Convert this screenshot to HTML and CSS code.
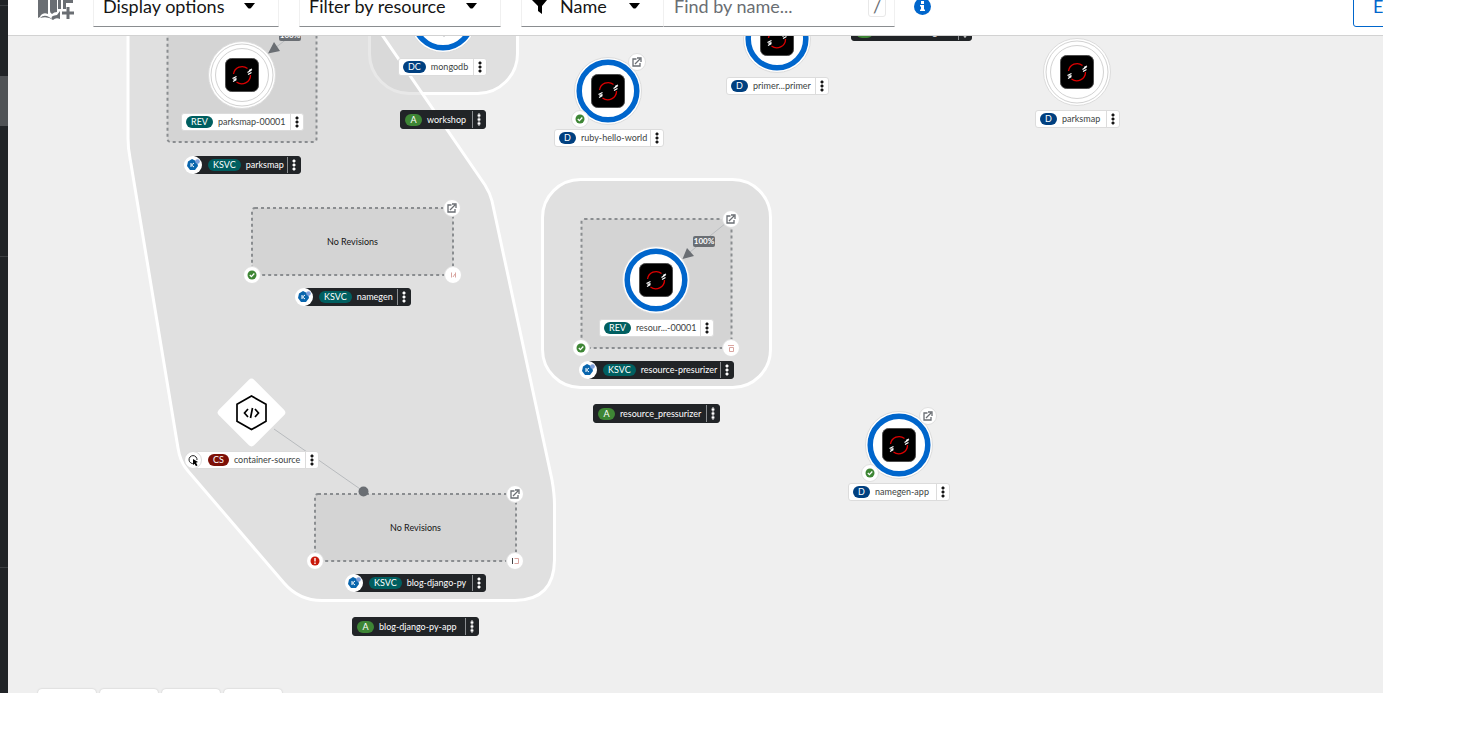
FILE: index.html
```html
<!DOCTYPE html>
<html lang="en">
<head>
<meta charset="utf-8">
<title>Topology</title>
<link rel="stylesheet" href="styles.css">
</head>
<body>
<div class="app">
  <nav class="sidebar" aria-label="Main">
    <span class="nav-item"></span>
    <span class="nav-item current"></span>
    <span class="nav-item tall"></span>
    <span class="nav-item taller"></span>
  </nav>
  <main class="main">
    <header class="toolbar">
      <button class="catalog" aria-label="Add to project">
        <svg width="38" height="42" viewBox="0 0 38 42"><path fill="#6a6e73" d="M0 8q5-2 10 0v21q-4-2-7 1-1 3-3 3zM12 9q3-2 7-2v20q-3 0-5 2-2-1-2-3zM20 7q3 0 3 2v15h-3zM25 9q4-2 10-1v10h-7v6h-3zM2 33q4-4 9-1l3 2q-2-3 5-4l3-4v8q-4-2-7 1-5-4-13-2z"/><path stroke="#6a6e73" stroke-width="3" d="M30 22v12M24 28h12"/></svg>
      </button>
      <button class="toggle display">Display options<svg class="caret" width="12" height="6"><path d="M0 0h11l-4 5q-1.500 1-3 0z"/></svg></button>
      <button class="toggle filter">Filter by resource<svg class="caret" width="12" height="6"><path d="M0 0h11l-4 5q-1.500 1-3 0z"/></svg></button>
      <div class="search-group">
        <label class="toggle by">
          <svg width="17" height="16"><path d="M1 0h15q1 1 0 2l-5 6v8l-4-3v-5l-6-6q-1-1 0-2z"/></svg>
          <select aria-label="Search by"><option>Name</option><option>Label</option></select>
          <svg class="caret" width="12" height="6"><path d="M0 0h11l-4 5q-1.500 1-3 0z"/></svg>
        </label>
        <div class="find"><input type="text" placeholder="Find by name..." aria-label="Find by name"><kbd>/</kbd></div>
      </div>
      <button class="info" aria-label="Search help"><svg width="17" height="17"><circle cx="8.500" cy="8.500" r="8.500" fill="#06c"/><path fill="#fff" d="M7 3h3v3h-3zM6 7h4v4.500h1v1.500h-5v-1.500h1v-3h-1z"/></svg></button>
      <div class="actions"><button class="export">Export application</button></div>
    </header>

    <section class="canvas" aria-label="Topology view">
      <svg class="graph">
        <defs>
          <g id="logo">
            <rect x="-16.500" y="-16.500" width="33" height="33" rx="6" fill="#000" stroke="#4c4c4c"/>
            <path d="M-8.500-1A8.700 8.700 0 0 1 5.500-6.500M8.500 0A8.700 8.700 0 0 1-5.500 7" fill="none" stroke="#d00" stroke-width="1.300"/>
            <path d="M5.500-2.500l4-2.500M6-.5l3.500-2M7-4.500l3-1.500M-9.500 3.500l4-2M-9 6.500l3.500-2M-8.500 4.500l3-1" stroke="#fff" stroke-width="1.200"/>
          </g>
          <g id="ring">
            <circle r="33.500" fill="#fff" stroke="#dcdcdc"/>
            <circle r="28.800" fill="#fff" stroke="#06c" stroke-width="5.500"/>
          </g>
          <g id="idle">
            <circle r="33.500" fill="#fff" stroke="#dcdcdc"/>
            <circle r="31" fill="#fff" stroke="#d2d2d2"/>
            <circle r="26.500" fill="#fff" stroke="#d2d2d2"/>
          </g>
          <circle id="dec" r="8.500" fill="#fff" stroke="#e0e0e0"/>
          <g id="open"><use href="#dec"/><path d="M-.5-3H-4V4H3V1M-2 2L3-3M0-4H4V0" fill="none" stroke="#6a6e73" stroke-width="1.300"/></g>
          <g id="ok"><use href="#dec"/><circle r="4.500" fill="#3e8635"/><path d="M-2.200 0L-.6 1.600 2.300-1.500" fill="none" stroke="#fff" stroke-width="1.300"/></g>
          <g id="err"><use href="#dec"/><circle r="4.500" fill="#c9190b"/><path d="M0-3v3.500M0 1.500v1.500" stroke="#fff" stroke-width="1.400"/></g>
        </defs>
        <g transform="translate(-8 -36)">
          <rect class="zone" x="369.500" y="-60" width="148" height="153.500" rx="40"/>
          <path class="blob" d="M128 0V138Q128 148 130 158L178 448Q180 462 188 471L284 583Q299 600.500 322 600.500H515Q554 600 554.500 560V505Q554.500 494 552 480L492 201Q490 193 485 185L365 10z"/>
          <rect class="zone" x="542.500" y="179.500" width="228" height="208" rx="38"/>

          <g class="revision">
            <rect x="167.500" y="0" width="149" height="142" rx="3"/>
            <rect x="252" y="208" width="201" height="67" rx="3"/>
            <rect x="581.500" y="219" width="150" height="129" rx="3"/>
            <rect x="315" y="494" width="201" height="67" rx="3"/>
          </g>

          <path d="M317 16L275 48M731 219L690 252M274 429L363 491" stroke="#b8bbbe" fill="none"/>
          <path d="M268 53.500l12-2.500-6-9zM682.500 259l11.500-3-7-8z" fill="#6a6e73"/>
          <circle cx="363.500" cy="491.500" r="5" fill="#6a6e73"/>

          <use href="#idle" x="242" y="75"/><use href="#logo" x="242" y="75"/>
          <use href="#ring" x="443" y="19"/>
          <path d="M444 30v7" stroke="#b8bbbe"/>
          <use href="#ring" x="608" y="91"/><use href="#logo" x="608" y="91"/>
          <use href="#ring" x="777" y="39"/><use href="#logo" x="777" y="39"/>
          <use href="#idle" x="1077" y="72"/><use href="#logo" x="1077" y="72"/>
          <use href="#ring" x="656" y="280"/><use href="#logo" x="656" y="280"/>
          <use href="#ring" x="899" y="445"/><use href="#logo" x="899" y="445"/>

          <rect x="-25" y="-25" width="50" height="50" rx="4" fill="#fff" transform="translate(251.500 412.500) rotate(45)"/>
          <path d="M251.500 396L266 404.300V421.300L251.500 429.600 237 421.300V404.300z" fill="none" stroke="#000" stroke-width="1.700"/>
          <path d="M248 409l-3.500 4 3.500 4M255 409l3.500 4-3.500 4M252.500 408l-2 10" fill="none" stroke="#000" stroke-width="1.700"/>

          <use href="#open" x="637" y="62"/><use href="#ok" x="580" y="119"/>
          <use href="#open" x="452" y="208"/><use href="#ok" x="252" y="275"/><use href="#dec" x="453" y="275"/>
          <use href="#open" x="731" y="219"/><use href="#ok" x="581" y="348"/><use href="#dec" x="731" y="348"/>
          <use href="#open" x="515" y="494"/><use href="#err" x="315" y="561"/><use href="#dec" x="515" y="561"/>
          <use href="#open" x="928" y="416"/><use href="#ok" x="870" y="473"/>
          <g fill="none" stroke="#d9a5a0">
            <path d="M451.500 272.500v5M455.500 272.500v5M453 277l2-3"/>
            <path d="M729.500 347.500h4v4h-4zM728 345.500h6"/>
            <path d="M514.500 558.500h4v5h-4"/>
          </g>
          <path d="M512.500 558v6" stroke="#444"/>
        </g>
      </svg>

      <span class="traffic t1">100%</span>
      <span class="traffic t2">100%</span>
      <p class="empty e1">No Revisions</p>
      <p class="empty e2">No Revisions</p>

      <div class="label n-rev1"><span class="badge teal">REV</span><span class="name">parksmap-00001</span><button class="kebab" aria-label="Actions"></button></div>
      <div class="label dark knative n-parks"><svg class="kn" viewBox="-9 -9 18 18"><circle r="9" fill="#fff"/><path fill="#0865ad" d="M-1-6L4-3.500 5 1 2 5h-5L-6 1-5-3.500z"/><circle cx="4.500" cy="-3.500" r="2.300" fill="#7e9fda"/><path d="M-2-2v4M1-2L-1.500 0l2.500 2" stroke="#fff" fill="none"/></svg><span class="badge teal">KSVC</span><span class="name">parksmap</span><button class="kebab" aria-label="Actions"></button></div>
      <div class="label n-mongo"><span class="badge navy">DC</span><span class="name">mongodb</span><button class="kebab" aria-label="Actions"></button></div>
      <div class="label dark group n-workshop"><span class="badge green">A</span><span class="name">workshop</span><button class="kebab" aria-label="Actions"></button></div>
      <div class="label n-ruby"><span class="badge navy">D</span><span class="name">ruby-hello-world</span><button class="kebab" aria-label="Actions"></button></div>
      <div class="label n-primer"><span class="badge navy">D</span><span class="name">primer...primer</span><button class="kebab" aria-label="Actions"></button></div>
      <div class="label dark group n-image"><span class="badge green">A</span><span class="name">container-image</span><button class="kebab" aria-label="Actions"></button></div>
      <div class="label n-parks2"><span class="badge navy">D</span><span class="name">parksmap</span><button class="kebab" aria-label="Actions"></button></div>
      <div class="label dark knative n-namegen"><svg class="kn" viewBox="-9 -9 18 18"><circle r="9" fill="#fff"/><path fill="#0865ad" d="M-1-6L4-3.500 5 1 2 5h-5L-6 1-5-3.500z"/><circle cx="4.500" cy="-3.500" r="2.300" fill="#7e9fda"/><path d="M-2-2v4M1-2L-1.500 0l2.500 2" stroke="#fff" fill="none"/></svg><span class="badge teal">KSVC</span><span class="name">namegen</span><button class="kebab" aria-label="Actions"></button></div>
      <div class="label n-rev2"><span class="badge teal">REV</span><span class="name">resour...-00001</span><button class="kebab" aria-label="Actions"></button></div>
      <div class="label dark knative n-resource"><svg class="kn" viewBox="-9 -9 18 18"><circle r="9" fill="#fff"/><path fill="#0865ad" d="M-1-6L4-3.500 5 1 2 5h-5L-6 1-5-3.500z"/><circle cx="4.500" cy="-3.500" r="2.300" fill="#7e9fda"/><path d="M-2-2v4M1-2L-1.500 0l2.500 2" stroke="#fff" fill="none"/></svg><span class="badge teal">KSVC</span><span class="name">resource-presurizer</span><button class="kebab" aria-label="Actions"></button></div>
      <div class="label dark group n-press"><span class="badge green">A</span><span class="name">resource_pressurizer</span><button class="kebab" aria-label="Actions"></button></div>
      <div class="label knative n-cs"><svg class="kn" viewBox="-9 -9 18 18"><circle r="8.500" fill="#fff" stroke="#dcdcdc"/><path d="M1 3.500A4 4 0 1 1 4 0" fill="none" stroke="#222"/><path d="M0-1l5 3-2 .8 1.500 2.500-1.500 1-1.500-2.500L0 5z" fill="#000"/></svg><span class="badge red">CS</span><span class="name">container-source</span><button class="kebab" aria-label="Actions"></button></div>
      <div class="label dark knative n-blog"><svg class="kn" viewBox="-9 -9 18 18"><circle r="9" fill="#fff"/><path fill="#0865ad" d="M-1-6L4-3.500 5 1 2 5h-5L-6 1-5-3.500z"/><circle cx="4.500" cy="-3.500" r="2.300" fill="#7e9fda"/><path d="M-2-2v4M1-2L-1.500 0l2.500 2" stroke="#fff" fill="none"/></svg><span class="badge teal">KSVC</span><span class="name">blog-django-py</span><button class="kebab" aria-label="Actions"></button></div>
      <div class="label dark group n-blogapp"><span class="badge green">A</span><span class="name">blog-django-py-app</span><button class="kebab" aria-label="Actions"></button></div>
      <div class="label n-app"><span class="badge navy">D</span><span class="name">namegen-app</span><button class="kebab" aria-label="Actions"></button></div>

      <div class="zoom-bar">
        <button aria-label="Zoom in"></button>
        <button aria-label="Zoom out"></button>
        <button aria-label="Fit to screen"></button>
        <button aria-label="Reset view"></button>
      </div>
    </section>
  </main>
</div>
</body>
</html>
```

FILE: styles.css
```css
* { box-sizing: border-box; }

body {
  margin: 0;
  background: #fff;
  color: #151515;
  font-family: Lato, "Open Sans", sans-serif;
}

button, select, input {
  font: inherit;
  color: inherit;
  margin: 0;
  padding: 0;
  border: 0;
  background: none;
}

.app {
  display: flex;
  height: calc(100vh - 36px);
  margin-right: 86px;
  overflow: hidden;
}

/* Navigation edge */
.sidebar {
  flex: none;
  width: 8px;
  background: #212427;
  display: flex;
  flex-direction: column;
}
.nav-item { height: 6px; border-bottom: 1px solid #3c3f42; }
.nav-item.current { height: 50px; margin-top: 70px; background: #4f5255; border: 0; }
.nav-item.tall { height: 131px; }
.nav-item.taller { height: 311px; }

.main {
  flex: 1;
  min-width: 0;
  display: flex;
  flex-direction: column;
}

/* Toolbar */
.toolbar {
  flex: none;
  height: 36px;
  padding: 0 0 8px 30px;
  display: flex;
  align-items: flex-end;
  overflow: hidden;
  border-bottom: 1px solid #d2d2d2;
  font-size: 18px;
  background: #fff;
}
.toolbar > * { flex: none; height: 42px; }
.catalog { width: 38px; margin-right: 17px; }
.toggle {
  display: flex;
  align-items: center;
  gap: 12px;
  padding: 0 9px;
  border: 1px solid #f0f0f0;
  border-bottom-color: #8a8d90;
}
.caret { margin-left: auto; }
.display { width: 186px; padding-right: 22px; margin-right: 20px; }
.filter { width: 202px; padding-right: 22px; margin-right: 20px; }
.search-group { display: flex; width: 374px; }
.by { flex: none; width: 143px; padding-right: 22px; }
.by select { appearance: none; width: 54px; }
.find {
  flex: 1;
  min-width: 0;
  display: flex;
  align-items: center;
  padding: 0 8px 0 10px;
  border: 1px solid #f0f0f0;
  border-left: 0;
  border-bottom-color: #8a8d90;
}
.find input { flex: 1; min-width: 0; outline: 0; }
.find input::placeholder { color: #6a6e73; opacity: 1; }
.find kbd {
  width: 18px;
  font: inherit;
  line-height: 20px;
  text-align: center;
  color: #6a6e73;
  border: 1px solid #e8e8e8;
  border-radius: 3px;
}
.info { display: flex; align-items: center; margin-left: 19px; }
.toolbar .actions { width: 30px; margin-left: auto; overflow: hidden; }
.export {
  height: 42px;
  padding: 0 19px;
  white-space: nowrap;
  color: #06c;
  border: 1px solid #06c;
  border-radius: 3px;
}

/* Canvas */
.canvas {
  position: relative;
  flex: 1;
  overflow: hidden;
  background: #efefef;
}
.graph { display: block; width: 100%; height: 100%; }
.zone, .blob { fill: rgba(209, 209, 209, 0.5); stroke: #fff; stroke-width: 3px; }
.revision { fill: #d4d4d4; stroke: #8a8d90; stroke-width: 2px; stroke-dasharray: 3 3; }

.traffic {
  position: absolute;
  width: 22px;
  height: 11px;
  border-radius: 2px;
  background: #6a6e73;
  color: #fff;
  font-size: 8px;
  font-weight: 700;
  line-height: 11px;
  text-align: center;
}
.t1 { left: 271px; top: -6px; }
.t2 { left: 685px; top: 200px; }

.empty {
  position: absolute;
  width: 201px;
  margin: 0;
  font-size: 9px;
  line-height: 12px;
  text-align: center;
}
.e1 { left: 244px; top: 200px; }
.e2 { left: 307px; top: 486px; }

/* Node labels */
.label {
  position: absolute;
  display: flex;
  align-items: center;
  height: 18px;
  padding-left: 4px;
  border: 1px solid #dcdcdc;
  border-radius: 3px;
  background: #fff;
  font-size: 9px;
  line-height: 12px;
  white-space: nowrap;
}
.badge {
  min-width: 17px;
  margin-right: 5px;
  padding: 0 5px;
  border-radius: 6px;
  color: #fff;
  text-align: center;
}
.teal { background: #005f60; }
.navy { background: #004080; }
.green { background: #3e8635; }
.red { background: #7d1007; }
.name { flex: 1; min-width: 0; color: #3c3f42; }
.kebab {
  flex: none;
  align-self: stretch;
  width: 13px;
  border-left: 1px solid #dcdcdc;
  background: radial-gradient(circle, currentColor 1px, transparent 2px) center / 4px 4px repeat-y;
  background-clip: content-box;
  padding: 2px 0;
}
.dark { background: #212427; border-color: #212427; color: #fff; }
.dark .name { color: #fff; }
.dark .kebab { border-color: #8a8d90; }
.group { height: 19px; }
.knative { padding-left: 14px; }
.kn { position: absolute; left: -10px; top: -1px; width: 18px; height: 18px; }

.n-rev1 { left: 173px; top: 77px; width: 123px; }
.n-parks { left: 185px; top: 120px; width: 108px; }
.n-mongo { left: 390px; top: 22px; width: 89px; }
.n-workshop { left: 392px; top: 74px; width: 86px; }
.n-ruby { left: 546px; top: 93px; width: 110px; }
.n-primer { left: 718px; top: 41px; width: 103px; }
.n-image { left: 843px; top: -14px; width: 121px; }
.n-parks2 { left: 1027px; top: 74px; width: 85px; }
.n-namegen { left: 296px; top: 252px; width: 107px; }
.n-rev2 { left: 591px; top: 283px; width: 115px; }
.n-resource { left: 580px; top: 325px; width: 146px; }
.n-press { left: 585px; top: 368px; width: 127px; }
.n-cs { left: 185px; top: 415px; width: 126px; }
.n-blog { left: 346px; top: 538px; width: 132px; }
.n-blogapp { left: 344px; top: 581px; width: 127px; }
.n-app { left: 840px; top: 447px; width: 102px; }

/* Zoom controls */
.zoom-bar {
  position: absolute;
  left: 30px;
  bottom: -38px;
  display: flex;
  gap: 4px;
}
.zoom-bar button {
  width: 58px;
  height: 42px;
  border-radius: 4px;
  background: #fff;
  box-shadow: 0 0 2px rgba(3, 3, 3, 0.2);
}
```
